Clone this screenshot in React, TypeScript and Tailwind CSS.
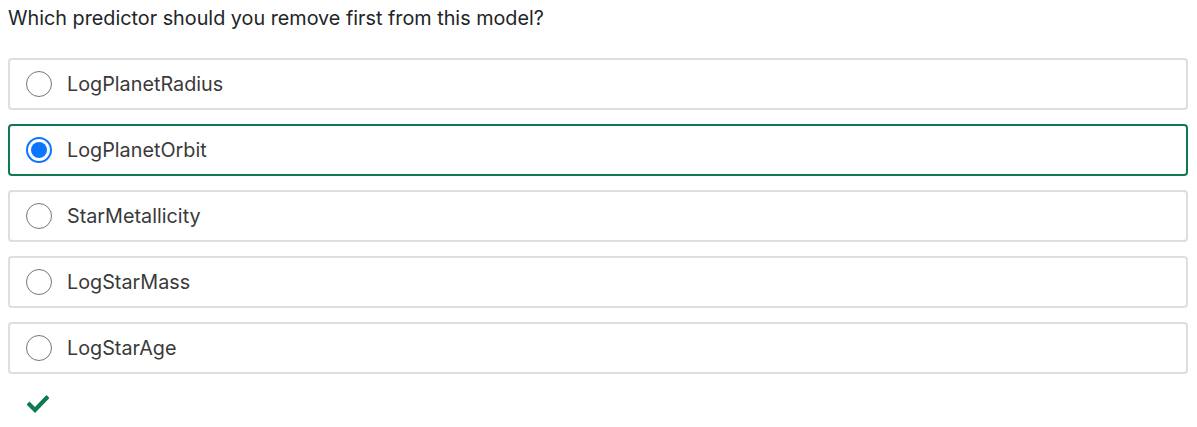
const options = [
  'LogPlanetRadius',
  'LogPlanetOrbit',
  'StarMetallicity',
  'LogStarMass',
  'LogStarAge',
];

const selected = 'LogPlanetOrbit';

function Radio({ checked }: { checked: boolean }) {
  if (checked) {
    return (
      <span className="flex h-[26px] w-[26px] shrink-0 items-center justify-center rounded-full border-2 border-[#0b75ff] bg-white">
        <span className="h-[16px] w-[16px] rounded-full bg-[#0b75ff]" />
      </span>
    );
  }
  return <span className="h-[26px] w-[26px] shrink-0 rounded-full border border-[#767676] bg-white" />;
}

export default function App() {
  return (
    <div className="bg-white px-[8px] pt-[5px] font-['Inter',sans-serif] text-[#212529]">
      <p className="text-[19.8px] leading-[26px]">Which predictor should you remove first from this model?</p>

      <div className="mt-[27px] flex w-[1180px] flex-col gap-[14px]">
        {options.map((opt) => {
          const isSel = opt === selected;
          return (
            <label
              key={opt}
              className={`flex h-[52px] items-center gap-[15px] rounded-[4px] border-2 pl-[16px] ${
                isSel ? 'border-[#0e7a4e]' : 'border-[#dedede]'
              }`}
            >
              <Radio checked={isSel} />
              <span className="pt-[2px] text-[19.8px] text-[#3a3a3a]">{opt}</span>
            </label>
          );
        })}
      </div>

      <div className="mt-[21px] pl-[19px]">
        <svg width="22" height="18" viewBox="0 0 22 18" className="block">
          <path d="M2.5 9.5 L8 15 L19.5 3" fill="none" stroke="#0e7a4e" strokeWidth="4.2" strokeLinecap="square" />
        </svg>
      </div>
    </div>
  );
}
